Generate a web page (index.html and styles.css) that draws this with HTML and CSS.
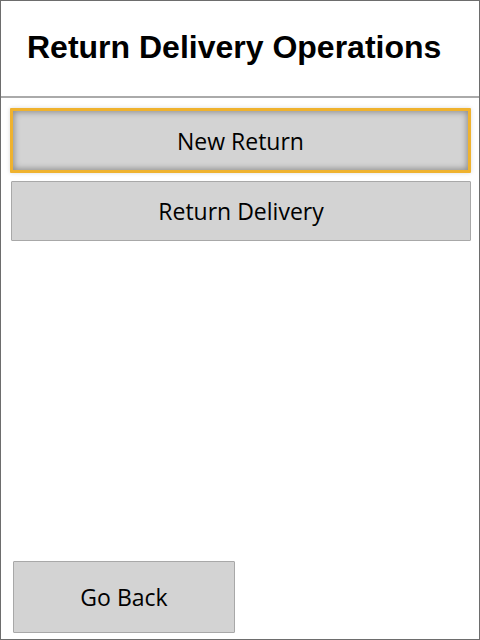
FILE: index.html
```html
<!DOCTYPE html>
<html lang="en">
  <head>
    <meta charset="UTF-8" />
    <title>Return Delivery Operations</title>
    <link rel="stylesheet" href="styles.css">
  </head>
  <body>
    <div class="screen">
      <header class="title-bar">
        <h1>Return Delivery Operations</h1>
      </header>

      <main class="menu">
        <button class="menu-btn focused">New Return</button>
        <button class="menu-btn">Return Delivery</button>
      </main>

      <footer class="actions">
        <button class="menu-btn back-btn">Go Back</button>
      </footer>
    </div>
  </body>
</html>
```

FILE: styles.css
```css
html,
body {
  margin: 0;
  background: #fff;
}

.screen {
  box-sizing: border-box;
  width: 480px;
  height: 640px;
  border: 1px solid #6d6d6d;
  display: flex;
  flex-direction: column;
}

/* Header */
.title-bar {
  height: 95px;
  border-bottom: 2px solid #aaa;
  display: flex;
  align-items: center;
  padding-left: 26px;
}

.title-bar h1 {
  margin: 0 0 2px;
  font-family: "Liberation Sans", Arial, sans-serif;
  font-size: 32px;
  font-weight: bold;
  color: #000;
}

/* Menu */
.menu {
  display: flex;
  flex-direction: column;
  gap: 8px;
  padding: 10px 8px 0 9px;
}

.menu-btn {
  box-sizing: border-box;
  height: 60px;
  background: #d3d3d3;
  border: 1px solid #a8a8a8;
  border-radius: 1px;
  font-family: "Open Sans", "Noto Sans", sans-serif;
  font-size: 23px;
  color: #000;
  padding: 0;
  cursor: pointer;
}

.menu-btn + .menu-btn {
  margin-left: 1px;
}

.menu-btn.focused {
  height: 65px;
  border: 3px solid #efb22e;
  box-shadow: inset 0 0 6px 1px rgba(0, 0, 0, 0.35), 0 0 4px rgba(0, 0, 0, 0.15);
}

/* Bottom actions */
.actions {
  margin-top: auto;
  padding: 0 0 6px 12px;
}

.back-btn {
  width: 222px;
  height: 72px;
}
```
